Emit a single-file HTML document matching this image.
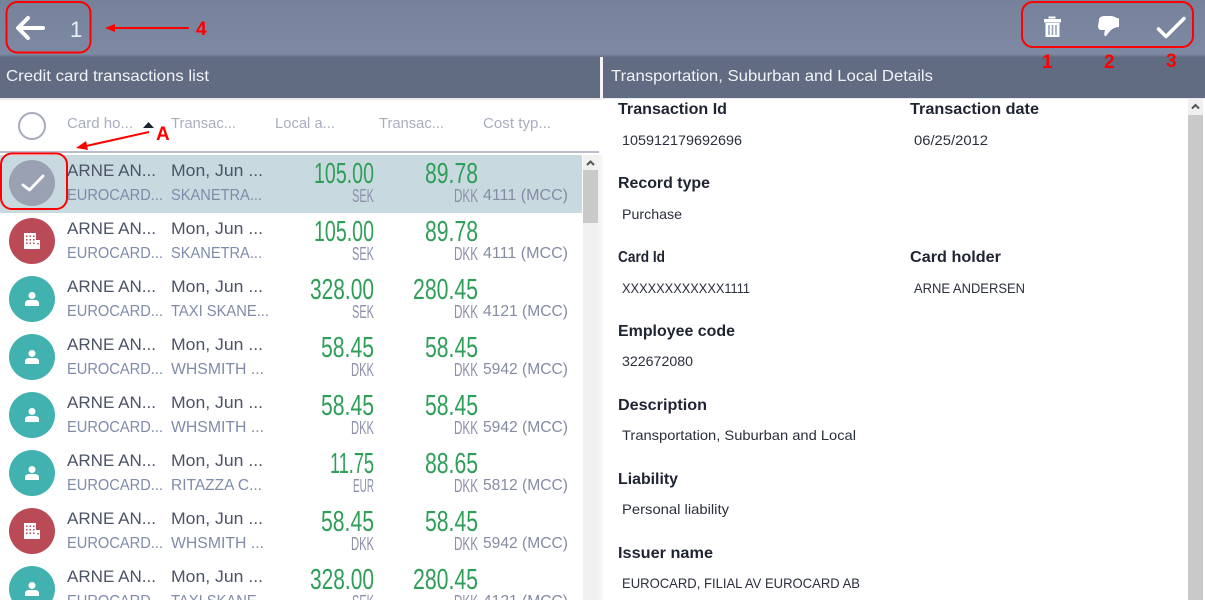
<!DOCTYPE html>
<html lang="en">
<head>
<meta charset="utf-8">
<title>Credit card transactions</title>
<style>
html,body{margin:0;padding:0;width:1205px;height:600px;overflow:hidden;background:#fff}
svg{display:block;font-family:"Liberation Sans",sans-serif}
.t{font-size:16px;fill:#f1f3f6}
.h{font-size:15px;fill:#a8aebf}
.a{font-size:17px;fill:#4b5366}
.b{font-size:16px;fill:#7f8ba8}
.n{font-size:29px;fill:#2e9e58}
.c{font-size:18px;fill:#8c90a9}
.m{font-size:16px;fill:#858ca3}
.l{font-size:16px;font-weight:bold;fill:#1f2433}
.v{font-size:14px;fill:#2a2f3c}
.r{font-weight:bold;font-size:19px;fill:#f00}
</style>
</head>
<body>
<svg width="1205" height="600" viewBox="0 0 1205 600" xmlns="http://www.w3.org/2000/svg">
<defs>
<linearGradient id="top" x1="0" y1="0" x2="0" y2="1"><stop offset="0" stop-color="#76829b"/><stop offset="1" stop-color="#7e8aa3"/></linearGradient>
<linearGradient id="edge" x1="0" y1="0" x2="0" y2="1"><stop offset="0" stop-color="#7e8aa3"/><stop offset="1" stop-color="#666f87"/></linearGradient>
<linearGradient id="gap" x1="0" y1="0" x2="1" y2="0"><stop offset="0" stop-color="#f0f0f0"/><stop offset="1" stop-color="#fafafa"/></linearGradient>
<g id="red">
<circle cx="32" cy="28" r="23" fill="#ba4a55"/>
<path d="M24 20h12v16H24zM36 27h4v9h-4z" fill="#fff"/>
<path d="M26 22.500h1.500v1.500h-1.500zM29.500 22.500h1.500v1.500h-1.500zM33 22.500h1.500v1.500h-1.500zM26 26h1.500v1.500h-1.500zM29.500 26h1.500v1.500h-1.500zM33 26h1.500v1.500h-1.500zM26 29.500h1.500v1.500h-1.500zM29.500 29.500h1.500v1.500h-1.500zM33 29.500h1.500v1.500h-1.500zM37.300 30h1.500v1.500h-1.500z" fill="#ba4a55"/>
</g>
<g id="teal">
<circle cx="32" cy="28" r="23" fill="#42b2b0"/>
<circle cx="32" cy="24.500" r="3.500" fill="#fff"/>
<path d="M25 35v-2.500c0-2.500 2-3.500 4-3.500h6c2 0 4 1 4 3.500V35z" fill="#fff"/>
</g>
</defs>

<!-- top bar -->
<rect width="1205" height="57" fill="url(#top)"/>
<rect y="54" width="1205" height="3" fill="url(#edge)"/>
<path d="M43 28H19" stroke="#fff" stroke-width="4" stroke-linecap="round"/>
<path d="M28 18L18 28L28 38" stroke="#fff" stroke-width="4" stroke-linecap="round" stroke-linejoin="round" fill="none"/>
<text x="70" y="37" font-size="22" fill="#eef0f4">1</text>

<!-- trash -->
<path d="M1049 18.500v-1.500h6v1.500M1044.500 19.500h16v2.500h-16z" fill="#fff" stroke="#fff"/>
<path d="M1045.500 23h14v14h-14z" fill="#fff"/>
<path d="M1049 25v10M1052.500 25v10M1056 25v10" stroke="#8f9bbd" stroke-width="1.500"/>
<!-- thumb down -->
<path d="M1099 20C1099 17 1102 16 1105 16L1111 16C1114 16 1116 18 1119 18.500L1119 27C1115 27 1112 29 1110 31L1106 36C1104.500 36.500 1104 35 1104.500 32L1105 30L1101 30C1099 30 1098 28 1098 26Z" fill="#fff"/>
<!-- check -->
<path d="M1158.500 29L1166 36.500L1184 18.500" stroke="#fff" stroke-width="3.500" stroke-linecap="round" stroke-linejoin="round" fill="none"/>

<!-- section titles -->
<rect y="57" width="600" height="41" fill="#616b82"/>
<rect x="603" y="57" width="602" height="41" fill="#616b82"/>
<rect y="98" width="600" height="2" fill="#e9e9ec"/>
<rect x="603" y="98" width="602" height="1" fill="#e9e9ec"/>
<rect x="600" y="57" width="3" height="43" fill="#f4f4f4"/>
<rect x="598" y="155" width="5" height="445" fill="url(#gap)"/>
<text class="t" x="6" y="81" textLength="203" lengthAdjust="spacingAndGlyphs">Credit card transactions list</text>
<text class="t" x="611" y="81" textLength="322" lengthAdjust="spacingAndGlyphs">Transportation, Suburban and Local Details</text>

<!-- list header -->
<circle cx="32" cy="126" r="13" fill="#fff" stroke="#a5abbd" stroke-width="2"/>
<text class="h" x="67" y="128" textLength="66" lengthAdjust="spacingAndGlyphs">Card ho...</text>
<path d="M143 128l5.500-6 5.500 6z" fill="#1d2230"/>
<text class="h" x="171" y="128" textLength="65" lengthAdjust="spacingAndGlyphs">Transac...</text>
<text class="h" x="275" y="128" textLength="60" lengthAdjust="spacingAndGlyphs">Local a...</text>
<text class="h" x="379" y="128" textLength="65" lengthAdjust="spacingAndGlyphs">Transac...</text>
<text class="h" x="483" y="128" textLength="68" lengthAdjust="spacingAndGlyphs">Cost typ...</text>
<rect y="151" width="599" height="2" fill="#b8bccb"/>

<!-- selected row background -->
<rect y="155" width="582" height="58" fill="#c8dadf"/>

<!-- row 1 -->
<g transform="translate(0,155)">
<circle cx="32" cy="28" r="23" fill="#99a1b3"/>
<path d="M23 30L29.500 35L43 21" stroke="#fff" stroke-width="2.800" stroke-linecap="round" stroke-linejoin="round" fill="none"/>
<text class="a" x="67" y="21" textLength="89" lengthAdjust="spacingAndGlyphs">ARNE AN...</text>
<text class="a" x="171" y="21" textLength="92" lengthAdjust="spacingAndGlyphs">Mon, Jun ...</text>
<text class="b" x="67" y="45" textLength="96" lengthAdjust="spacingAndGlyphs">EUROCARD...</text>
<text class="b" x="171" y="45" textLength="91" lengthAdjust="spacingAndGlyphs">SKANETRA...</text>
<text class="n" x="314" y="28" textLength="60" lengthAdjust="spacingAndGlyphs">105.00</text>
<text class="c" x="352" y="47" textLength="22" lengthAdjust="spacingAndGlyphs">SEK</text>
<text class="n" x="425" y="28" textLength="53" lengthAdjust="spacingAndGlyphs">89.78</text>
<text class="c" x="454" y="47" textLength="24" lengthAdjust="spacingAndGlyphs">DKK</text>
<text class="m" x="483" y="45" textLength="85" lengthAdjust="spacingAndGlyphs">4111 (MCC)</text>
</g>

<!-- row 2 -->
<g transform="translate(0,213)">
<use href="#red"/>
<text class="a" x="67" y="21" textLength="89" lengthAdjust="spacingAndGlyphs">ARNE AN...</text>
<text class="a" x="171" y="21" textLength="92" lengthAdjust="spacingAndGlyphs">Mon, Jun ...</text>
<text class="b" x="67" y="45" textLength="96" lengthAdjust="spacingAndGlyphs">EUROCARD...</text>
<text class="b" x="171" y="45" textLength="91" lengthAdjust="spacingAndGlyphs">SKANETRA...</text>
<text class="n" x="314" y="28" textLength="60" lengthAdjust="spacingAndGlyphs">105.00</text>
<text class="c" x="352" y="47" textLength="22" lengthAdjust="spacingAndGlyphs">SEK</text>
<text class="n" x="425" y="28" textLength="53" lengthAdjust="spacingAndGlyphs">89.78</text>
<text class="c" x="454" y="47" textLength="24" lengthAdjust="spacingAndGlyphs">DKK</text>
<text class="m" x="483" y="45" textLength="85" lengthAdjust="spacingAndGlyphs">4111 (MCC)</text>
</g>

<!-- row 3 -->
<g transform="translate(0,271)">
<use href="#teal"/>
<text class="a" x="67" y="21" textLength="89" lengthAdjust="spacingAndGlyphs">ARNE AN...</text>
<text class="a" x="171" y="21" textLength="92" lengthAdjust="spacingAndGlyphs">Mon, Jun ...</text>
<text class="b" x="67" y="45" textLength="96" lengthAdjust="spacingAndGlyphs">EUROCARD...</text>
<text class="b" x="171" y="45" textLength="98" lengthAdjust="spacingAndGlyphs">TAXI SKANE...</text>
<text class="n" x="310" y="28" textLength="64" lengthAdjust="spacingAndGlyphs">328.00</text>
<text class="c" x="352" y="47" textLength="22" lengthAdjust="spacingAndGlyphs">SEK</text>
<text class="n" x="413" y="28" textLength="65" lengthAdjust="spacingAndGlyphs">280.45</text>
<text class="c" x="454" y="47" textLength="24" lengthAdjust="spacingAndGlyphs">DKK</text>
<text class="m" x="483" y="45" textLength="85" lengthAdjust="spacingAndGlyphs">4121 (MCC)</text>
</g>

<!-- row 4 -->
<g transform="translate(0,329)">
<use href="#teal"/>
<text class="a" x="67" y="21" textLength="89" lengthAdjust="spacingAndGlyphs">ARNE AN...</text>
<text class="a" x="171" y="21" textLength="92" lengthAdjust="spacingAndGlyphs">Mon, Jun ...</text>
<text class="b" x="67" y="45" textLength="96" lengthAdjust="spacingAndGlyphs">EUROCARD...</text>
<text class="b" x="171" y="45" textLength="93" lengthAdjust="spacingAndGlyphs">WHSMITH ...</text>
<text class="n" x="321" y="28" textLength="53" lengthAdjust="spacingAndGlyphs">58.45</text>
<text class="c" x="351" y="47" textLength="23" lengthAdjust="spacingAndGlyphs">DKK</text>
<text class="n" x="425" y="28" textLength="53" lengthAdjust="spacingAndGlyphs">58.45</text>
<text class="c" x="454" y="47" textLength="24" lengthAdjust="spacingAndGlyphs">DKK</text>
<text class="m" x="483" y="45" textLength="85" lengthAdjust="spacingAndGlyphs">5942 (MCC)</text>
</g>

<!-- row 5 -->
<g transform="translate(0,387)">
<use href="#teal"/>
<text class="a" x="67" y="21" textLength="89" lengthAdjust="spacingAndGlyphs">ARNE AN...</text>
<text class="a" x="171" y="21" textLength="92" lengthAdjust="spacingAndGlyphs">Mon, Jun ...</text>
<text class="b" x="67" y="45" textLength="96" lengthAdjust="spacingAndGlyphs">EUROCARD...</text>
<text class="b" x="171" y="45" textLength="93" lengthAdjust="spacingAndGlyphs">WHSMITH ...</text>
<text class="n" x="321" y="28" textLength="53" lengthAdjust="spacingAndGlyphs">58.45</text>
<text class="c" x="351" y="47" textLength="23" lengthAdjust="spacingAndGlyphs">DKK</text>
<text class="n" x="425" y="28" textLength="53" lengthAdjust="spacingAndGlyphs">58.45</text>
<text class="c" x="454" y="47" textLength="24" lengthAdjust="spacingAndGlyphs">DKK</text>
<text class="m" x="483" y="45" textLength="85" lengthAdjust="spacingAndGlyphs">5942 (MCC)</text>
</g>

<!-- row 6 -->
<g transform="translate(0,445)">
<use href="#teal"/>
<text class="a" x="67" y="21" textLength="89" lengthAdjust="spacingAndGlyphs">ARNE AN...</text>
<text class="a" x="171" y="21" textLength="92" lengthAdjust="spacingAndGlyphs">Mon, Jun ...</text>
<text class="b" x="67" y="45" textLength="96" lengthAdjust="spacingAndGlyphs">EUROCARD...</text>
<text class="b" x="171" y="45" textLength="91" lengthAdjust="spacingAndGlyphs">RITAZZA C...</text>
<text class="n" x="330" y="28" textLength="44" lengthAdjust="spacingAndGlyphs">11.75</text>
<text class="c" x="353" y="47" textLength="21" lengthAdjust="spacingAndGlyphs">EUR</text>
<text class="n" x="425" y="28" textLength="53" lengthAdjust="spacingAndGlyphs">88.65</text>
<text class="c" x="454" y="47" textLength="24" lengthAdjust="spacingAndGlyphs">DKK</text>
<text class="m" x="483" y="45" textLength="85" lengthAdjust="spacingAndGlyphs">5812 (MCC)</text>
</g>

<!-- row 7 -->
<g transform="translate(0,503)">
<use href="#red"/>
<text class="a" x="67" y="21" textLength="89" lengthAdjust="spacingAndGlyphs">ARNE AN...</text>
<text class="a" x="171" y="21" textLength="92" lengthAdjust="spacingAndGlyphs">Mon, Jun ...</text>
<text class="b" x="67" y="45" textLength="96" lengthAdjust="spacingAndGlyphs">EUROCARD...</text>
<text class="b" x="171" y="45" textLength="93" lengthAdjust="spacingAndGlyphs">WHSMITH ...</text>
<text class="n" x="321" y="28" textLength="53" lengthAdjust="spacingAndGlyphs">58.45</text>
<text class="c" x="351" y="47" textLength="23" lengthAdjust="spacingAndGlyphs">DKK</text>
<text class="n" x="425" y="28" textLength="53" lengthAdjust="spacingAndGlyphs">58.45</text>
<text class="c" x="454" y="47" textLength="24" lengthAdjust="spacingAndGlyphs">DKK</text>
<text class="m" x="483" y="45" textLength="85" lengthAdjust="spacingAndGlyphs">5942 (MCC)</text>
</g>

<!-- row 8 -->
<g transform="translate(0,561)">
<use href="#teal"/>
<text class="a" x="67" y="21" textLength="89" lengthAdjust="spacingAndGlyphs">ARNE AN...</text>
<text class="a" x="171" y="21" textLength="92" lengthAdjust="spacingAndGlyphs">Mon, Jun ...</text>
<text class="b" x="67" y="45" textLength="96" lengthAdjust="spacingAndGlyphs">EUROCARD...</text>
<text class="b" x="171" y="45" textLength="98" lengthAdjust="spacingAndGlyphs">TAXI SKANE...</text>
<text class="n" x="310" y="28" textLength="64" lengthAdjust="spacingAndGlyphs">328.00</text>
<text class="c" x="352" y="47" textLength="22" lengthAdjust="spacingAndGlyphs">SEK</text>
<text class="n" x="413" y="28" textLength="65" lengthAdjust="spacingAndGlyphs">280.45</text>
<text class="c" x="454" y="47" textLength="24" lengthAdjust="spacingAndGlyphs">DKK</text>
<text class="m" x="483" y="45" textLength="85" lengthAdjust="spacingAndGlyphs">4121 (MCC)</text>
</g>

<!-- list scrollbar -->
<rect x="583" y="155" width="15" height="445" fill="#f0f0f0"/>
<path d="M587 165l3.500-3.500 3.500 3.500" stroke="#555" stroke-width="2" fill="none"/>
<rect x="583" y="170" width="15" height="53" fill="#c9c9c9"/>

<!-- details scrollbar -->
<rect x="1188" y="99" width="15" height="501" fill="#f0f0f0"/>
<path d="M1192 108.500l3.500-3.500 3.500 3.500" stroke="#555" stroke-width="2" fill="none"/>
<rect x="1188" y="115" width="15" height="485" fill="#c9c9c9"/>

<!-- details -->
<text class="l" x="618" y="114" textLength="109" lengthAdjust="spacingAndGlyphs">Transaction Id</text>
<text class="v" x="622" y="145" textLength="120" lengthAdjust="spacingAndGlyphs">105912179692696</text>
<text class="l" x="910" y="114" textLength="129" lengthAdjust="spacingAndGlyphs">Transaction date</text>
<text class="v" x="914" y="145" textLength="74" lengthAdjust="spacingAndGlyphs">06/25/2012</text>
<text class="l" x="618" y="188" textLength="92" lengthAdjust="spacingAndGlyphs">Record type</text>
<text class="v" x="622" y="219" textLength="60" lengthAdjust="spacingAndGlyphs">Purchase</text>
<text class="l" x="618" y="262" textLength="47" lengthAdjust="spacingAndGlyphs">Card Id</text>
<text class="v" x="622" y="293" textLength="128" lengthAdjust="spacingAndGlyphs">XXXXXXXXXXXX1111</text>
<text class="l" x="910" y="262" textLength="91" lengthAdjust="spacingAndGlyphs">Card holder</text>
<text class="v" x="914" y="293" textLength="111" lengthAdjust="spacingAndGlyphs">ARNE ANDERSEN</text>
<text class="l" x="618" y="336" textLength="117" lengthAdjust="spacingAndGlyphs">Employee code</text>
<text class="v" x="622" y="366" textLength="71" lengthAdjust="spacingAndGlyphs">322672080</text>
<text class="l" x="618" y="410" textLength="89" lengthAdjust="spacingAndGlyphs">Description</text>
<text class="v" x="622" y="440" textLength="234" lengthAdjust="spacingAndGlyphs">Transportation, Suburban and Local</text>
<text class="l" x="618" y="484" textLength="60" lengthAdjust="spacingAndGlyphs">Liability</text>
<text class="v" x="622" y="514" textLength="107" lengthAdjust="spacingAndGlyphs">Personal liability</text>
<text class="l" x="618" y="558" textLength="95" lengthAdjust="spacingAndGlyphs">Issuer name</text>
<text class="v" x="622" y="588" textLength="238" lengthAdjust="spacingAndGlyphs">EUROCARD, FILIAL AV EUROCARD AB</text>

<!-- annotations -->
<rect x="6.500" y="2" width="84" height="50.500" rx="11" fill="none" stroke="#f00" stroke-width="2"/>
<rect x="1022" y="2" width="171" height="45" rx="11" fill="none" stroke="#f00" stroke-width="2"/>
<rect x="1" y="153.500" width="66" height="55.500" rx="11" fill="none" stroke="#f00" stroke-width="2"/>
<path d="M114 28H189" stroke="#f00" stroke-width="2"/>
<path d="M105 28L115 24V32z" fill="#f00"/>
<path d="M86 146L149 132" stroke="#f00" stroke-width="2"/>
<path d="M76 148L86 141L88 150z" fill="#f00"/>
<text class="r" x="196" y="35">4</text>
<text class="r" x="1042" y="68">1</text>
<text class="r" x="1104" y="68">2</text>
<text class="r" x="1166" y="67">3</text>
<text class="r" x="156" y="140">A</text>
</svg>
</body>
</html>
